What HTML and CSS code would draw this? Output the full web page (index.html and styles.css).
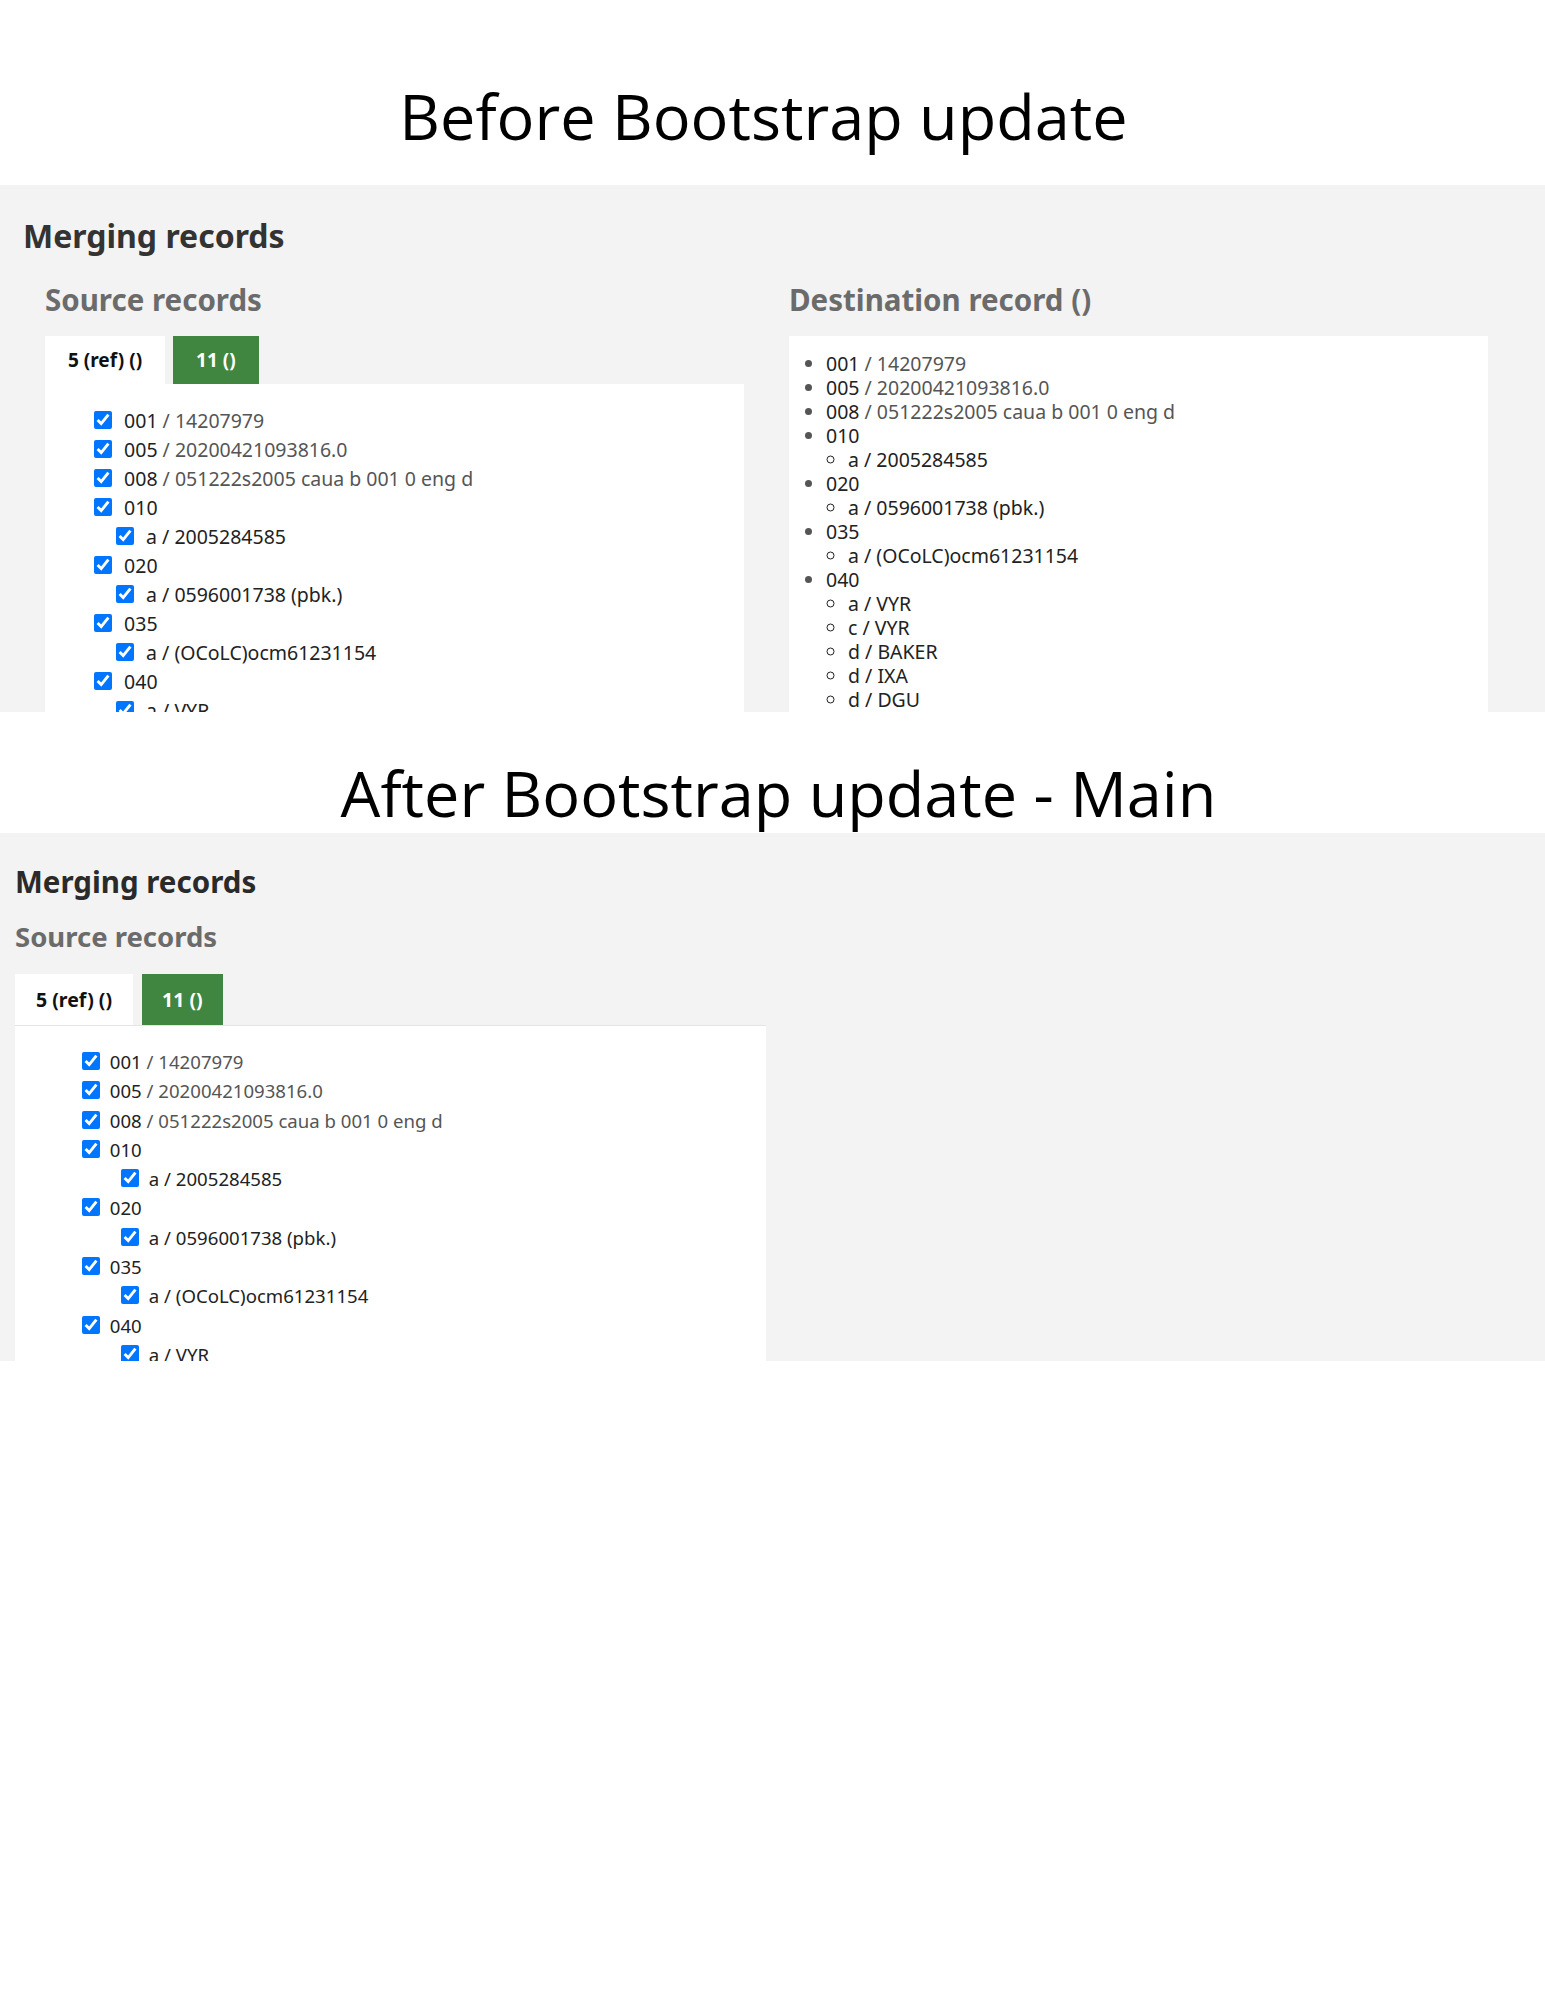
FILE: index.html
```html
<!DOCTYPE html>
<html lang="en">
<head>
    <meta charset="UTF-8">
    <title>Merging records - Bootstrap comparison</title>
    <link rel="stylesheet" href="styles.css">
</head>
<body>

    <!-- Before -->
    <div class="caption caption-before">Before Bootstrap update</div>

    <div class="shot shot-before">
        <h2 class="page-title">Merging records</h2>
        <div class="columns">
            <div class="column">
                <h3 class="section-title">Source records</h3>
                <div class="tabs">
                    <span class="tab active">5 (ref) ()</span>
                    <span class="tab green">11 ()</span>
                </div>
                <div class="panel">
                    <ul class="fields">
                        <li><label><input type="checkbox" checked> <span class="tag">001</span> / 14207979</label></li>
                        <li><label><input type="checkbox" checked> <span class="tag">005</span> / 20200421093816.0</label></li>
                        <li><label><input type="checkbox" checked> <span class="tag">008</span> / 051222s2005 caua b 001 0 eng d</label></li>
                        <li><label><input type="checkbox" checked> <span class="tag">010</span></label>
                            <ul>
                                <li><label><input type="checkbox" checked> a / 2005284585</label></li>
                            </ul>
                        </li>
                        <li><label><input type="checkbox" checked> <span class="tag">020</span></label>
                            <ul>
                                <li><label><input type="checkbox" checked> a / 0596001738 (pbk.)</label></li>
                            </ul>
                        </li>
                        <li><label><input type="checkbox" checked> <span class="tag">035</span></label>
                            <ul>
                                <li><label><input type="checkbox" checked> a / (OCoLC)ocm61231154</label></li>
                            </ul>
                        </li>
                        <li><label><input type="checkbox" checked> <span class="tag">040</span></label>
                            <ul>
                                <li><label><input type="checkbox" checked> a / VYR</label></li>
                            </ul>
                        </li>
                    </ul>
                </div>
            </div>

            <div class="column">
                <h3 class="section-title">Destination record ()</h3>
                <div class="panel dest">
                    <ul class="record">
                        <li><span class="tag">001</span> / 14207979</li>
                        <li><span class="tag">005</span> / 20200421093816.0</li>
                        <li><span class="tag">008</span> / 051222s2005 caua b 001 0 eng d</li>
                        <li><span class="tag">010</span>
                            <ul><li>a / 2005284585</li></ul>
                        </li>
                        <li><span class="tag">020</span>
                            <ul><li>a / 0596001738 (pbk.)</li></ul>
                        </li>
                        <li><span class="tag">035</span>
                            <ul><li>a / (OCoLC)ocm61231154</li></ul>
                        </li>
                        <li><span class="tag">040</span>
                            <ul>
                                <li>a / VYR</li>
                                <li>c / VYR</li>
                                <li>d / BAKER</li>
                                <li>d / IXA</li>
                                <li>d / DGU</li>
                            </ul>
                        </li>
                    </ul>
                </div>
            </div>
        </div>
    </div>

    <!-- After -->
    <div class="caption caption-after">After Bootstrap update - Main</div>

    <div class="shot shot-after">
        <h2 class="page-title">Merging records</h2>
        <h3 class="section-title">Source records</h3>
        <div class="column">
            <div class="tabs">
                <span class="tab active">5 (ref) ()</span>
                <span class="tab green">11 ()</span>
            </div>
            <div class="panel">
                <ul class="fields">
                    <li><label><input type="checkbox" checked> <span class="tag">001</span> / 14207979</label></li>
                    <li><label><input type="checkbox" checked> <span class="tag">005</span> / 20200421093816.0</label></li>
                    <li><label><input type="checkbox" checked> <span class="tag">008</span> / 051222s2005 caua b 001 0 eng d</label></li>
                    <li><label><input type="checkbox" checked> <span class="tag">010</span></label>
                        <ul>
                            <li><label><input type="checkbox" checked> a / 2005284585</label></li>
                        </ul>
                    </li>
                    <li><label><input type="checkbox" checked> <span class="tag">020</span></label>
                        <ul>
                            <li><label><input type="checkbox" checked> a / 0596001738 (pbk.)</label></li>
                        </ul>
                    </li>
                    <li><label><input type="checkbox" checked> <span class="tag">035</span></label>
                        <ul>
                            <li><label><input type="checkbox" checked> a / (OCoLC)ocm61231154</label></li>
                        </ul>
                    </li>
                    <li><label><input type="checkbox" checked> <span class="tag">040</span></label>
                        <ul>
                            <li><label><input type="checkbox" checked> a / VYR</label></li>
                        </ul>
                    </li>
                </ul>
            </div>
        </div>
    </div>

</body>
</html>
```

FILE: styles.css
```css
/* General */
body {
    margin: 0;
    font-family: 'Noto Sans', 'Open Sans', sans-serif;
    background: #fff;
    color: #212121;
}

ul {
    list-style: none;
    margin: 0;
    padding: 0;
}

/* Captions above each screenshot */
.caption {
    font-family: 'Open Sans', 'Noto Sans', sans-serif;
    font-size: 63px;
    color: #000;
    text-align: center;
}

.caption-before {
    height: 80px;
    line-height: 80px;
    padding: 76px 18px 29px 0;
}

.caption-after {
    height: 64px;
    line-height: 64px;
    padding: 49px 0 8px 12px;
}

/* Screenshot bands */
.shot {
    background-color: #f2f3f2;
    overflow: hidden;
}

.shot-before {
    height: 496px;
    padding: 31px 57px 0 23px;
}

.shot-after {
    height: 497px;
    padding: 31px 0 0 15px;
}

.page-title {
    margin: 0;
    font-size: 32px;
    line-height: 40px;
    font-weight: 700;
    color: #333;
}

.section-title {
    margin: 26px 0 18px;
    font-size: 29.5px;
    line-height: 36px;
    font-weight: 700;
    color: #6b6b6b;
}

.columns {
    display: grid;
    grid-template-columns: 1fr 1fr;
    gap: 45px;
    padding-left: 22px;
}

/* Tabs */
.tabs {
    display: flex;
    gap: 8px;
}

.tab {
    display: block;
    height: 48px;
    line-height: 48px;
    padding: 0 23px;
    font-size: 19px;
    font-weight: 700;
}

.tab.active {
    background-color: #fff;
    color: #111;
}

.tab.green {
    background-color: #408540;
    color: #fff;
    padding: 0 23px;
}

/* Panels */
.panel {
    background-color: #fff;
    height: 600px;
}

.fields {
    padding: 22px 0 0 49px;
    font-size: 19.5px;
    line-height: 29px;
    color: #555;
}

.fields label {
    display: block;
}

.fields ul {
    padding-left: 22px;
    color: #222;
}

.fields input {
    width: 18px;
    height: 18px;
    margin: 0 7px 0 0;
    vertical-align: -1px;
}

.tag {
    color: #222;
}

.record {
    padding: 16px 0 0 37px;
    font-size: 19.5px;
    line-height: 24px;
    color: #555;
    list-style: disc;
}

.record ul {
    padding-left: 22px;
    list-style: circle;
    color: #222;
}

/* After update */
.shot-after .page-title {
    font-size: 29.5px;
    line-height: 35px;
    color: #2a2a2a;
}

.shot-after .section-title {
    margin: 22px 0 22px;
    font-size: 27.5px;
    line-height: 31px;
}

.shot-after .column {
    width: 751px;
}

.shot-after .tabs {
    gap: 9px;
}

.shot-after .tab {
    height: 51px;
    line-height: 51px;
    padding: 0 21px;
    font-size: 19.5px;
}

.shot-after .tab.green {
    padding: 0 20px;
}

.shot-after .tab.active {
    margin-bottom: -1px;
    position: relative;
}

.shot-after .panel {
    border-top: 1px solid #e4e6e4;
}

.shot-after .fields {
    padding: 21px 0 0 67px;
    font-size: 18.6px;
    line-height: 29.3px;
}

.shot-after .fields ul {
    padding-left: 39px;
}

.shot-after .fields input {
    margin-right: 5px;
}
```
